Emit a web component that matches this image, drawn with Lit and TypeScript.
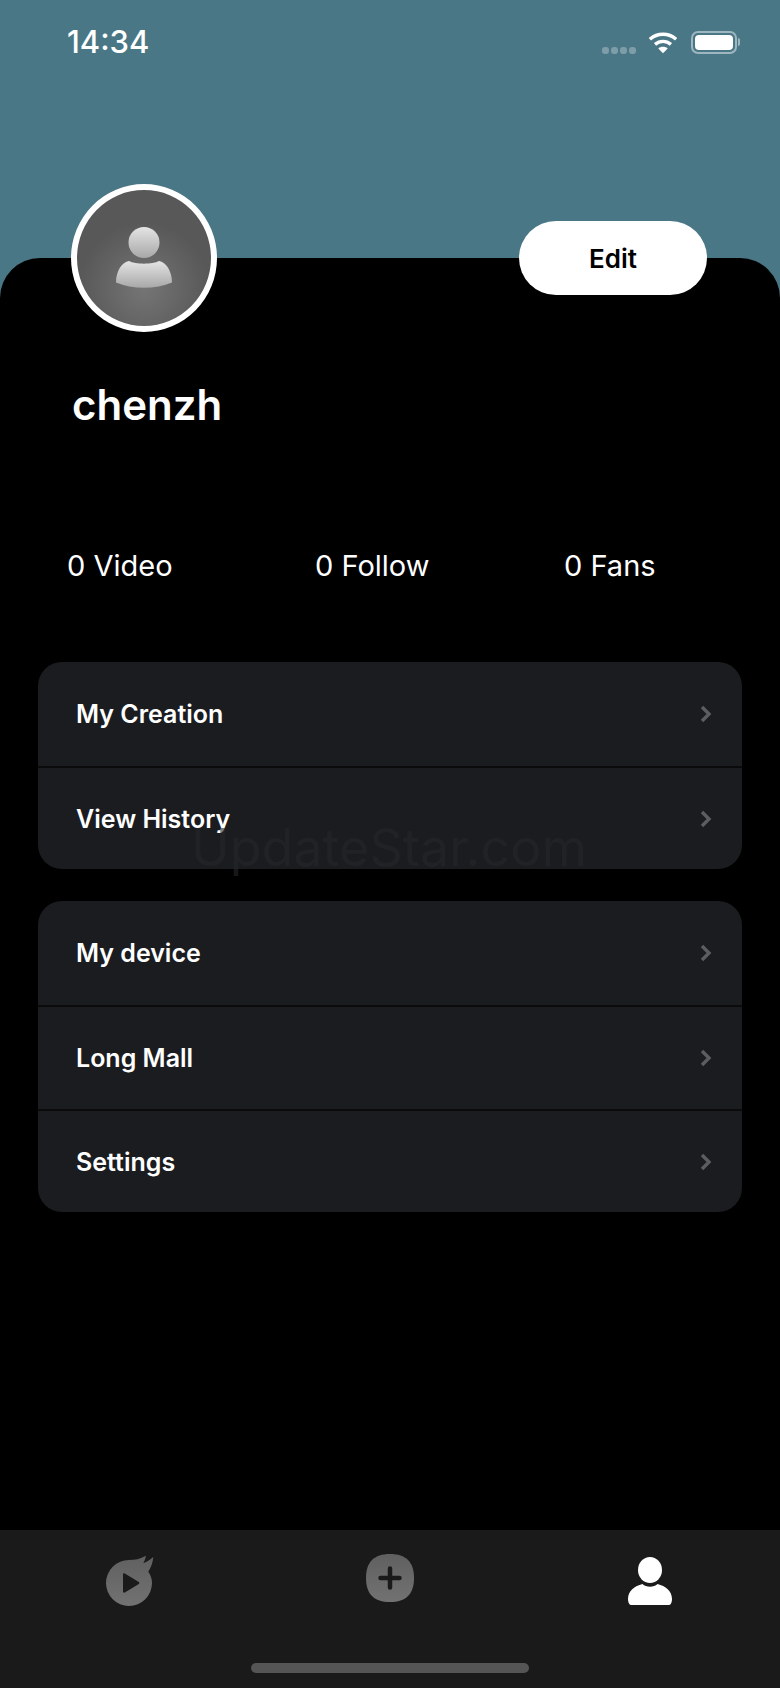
import { css, html, LitElement } from "lit";
import { customElement } from "lit/decorators.js";

const GROUPS = [
    ["My Creation", "View History"],
    ["My device", "Long Mall", "Settings"],
];

@customElement("app-root")
export class AppRoot extends LitElement {
    renderStatusBar() {
        return html`
        <div class="status">
            <span class="time">14:34</span>
            <div class="status-icons">
                <div class="dots"><i></i><i></i><i></i><i></i></div>
                <svg class="wifi" viewBox="0 0 32 24" fill="none" stroke="#fff" stroke-width="3.6" stroke-linecap="butt">
                    <path d="M2 8.5C10 1.5 22 1.5 30 8.5" />
                    <path d="M7.5 14C12.5 9.8 19.5 9.8 24.5 14" />
                    <path d="M16 23.5l-5-5.2c2.8-2.2 7.2-2.2 10 0z" fill="#fff" stroke="none" />
                </svg>
                <div class="battery"><div class="battery-fill"></div></div>
                <div class="battery-cap"></div>
            </div>
        </div>`;
    }

    renderRow(label: string) {
        return html`
        <div class="row">
            <span>${label}</span>
            <svg class="chevron" viewBox="0 0 12 18" fill="none" stroke="#5c5d60" stroke-width="3.4">
                <path d="M2 2l7 7-7 7" />
            </svg>
        </div>`;
    }

    renderTabs() {
        return html`
        <div class="tabs">
            <div class="tab-icons">
                <svg class="tab-icon" viewBox="0 0 60 60">
                    <defs>
                        <linearGradient id="grey" x1="0" y1="0" x2="0" y2="1">
                            <stop offset="0" stop-color="#606060" />
                            <stop offset="1" stop-color="#727272" />
                        </linearGradient>
                    </defs>
                    <path fill="url(#grey)" d="M29 6C35 6 40 5 46 1.700C45.500 4.500 44.500 7 43.300 9.300C47 8 50.500 5.500 53.300 3C53 8 51 13.500 48.300 17.700C50.700 21 52 25 52 29A23 23 0 1 1 29 6Z" />
                    <path fill="#1a1a1a" d="M23 20.500c0-1 1-1.500 1.800-1l14 8.500c.7.500.7 1.500 0 2l-14 8.500c-.8.500-1.800 0-1.800-1z" />
                </svg>
                <svg class="tab-icon plus" viewBox="0 0 48 48">
                    <path fill="url(#grey)" d="M24 0C40 0 48 8 48 24C48 40 40 48 24 48C8 48 0 40 0 24C0 8 8 0 24 0Z" />
                    <path d="M24 14.500v19M14.500 24h19" stroke="#1a1a1a" stroke-width="4.500" stroke-linecap="round" />
                </svg>
                <svg class="tab-icon me" viewBox="0 0 44 48" fill="#fff">
                    <ellipse cx="22" cy="13" rx="12" ry="13" />
                    <path d="M14.500 27c3.500 3.500 11.500 3.500 15 0C37.500 29 44 34 44 42c0 2.500-1 6-3 6H3c-2 0-3-3.500-3-6 0-8 6.500-13 14.500-15z" />
                </svg>
            </div>
            <div class="home-bar"></div>
        </div>`;
    }

    render() {
        return html`
        <div class="hero">${this.renderStatusBar()}</div>
        <div class="panel">
            <div class="profile-head">
                <div class="avatar">
                    <svg viewBox="0 0 56 61">
                        <defs>
                            <linearGradient id="face" x1="0" y1="0" x2="0" y2="1">
                                <stop offset="0" stop-color="#e4e4e4" />
                                <stop offset="1" stop-color="#a8a8a8" />
                            </linearGradient>
                        </defs>
                        <circle cx="28" cy="15.500" r="15.500" fill="url(#face)" />
                        <path fill="url(#face)" d="M13 34C19 37.500 37 37.500 43 34C50 35 56 44 56 55.500C40 62.500 16 62.500 0 55.500C0 44 6 35 13 34Z" />
                    </svg>
                </div>
                <button class="edit">Edit</button>
            </div>
            <div class="name">chenzh</div>
            <div class="stats">
                <span>0 Video</span>
                <span>0 Follow</span>
                <span>0 Fans</span>
            </div>
            <div class="groups">
                ${GROUPS.map(rows => html`<div class="card">${rows.map(r => this.renderRow(r))}</div>`)}
                <div class="watermark">UpdateStar.com</div>
            </div>
            <div class="spacer"></div>
            ${this.renderTabs()}
        </div>`;
    }

    static styles = css`
        :host {
            display: flex;
            flex-direction: column;
            width: 780px;
            height: 1688px;
            background: #4a7785;
            color: #fff;
            font-family: Inter, "Liberation Sans", sans-serif;
            overflow: hidden;
        }

        .hero {
            height: 258px;
            flex: none;
        }

        .status {
            display: flex;
            justify-content: space-between;
            align-items: center;
            padding: 26px 40px 0 67px;
        }

        .time {
            font-size: 31px;
            font-weight: 500;
            line-height: 32px;
        }

        .status-icons {
            display: flex;
            align-items: center;
        }

        .dots {
            display: flex;
            gap: 2px;
            margin: 16px 12px 0 0;
        }

        .dots i {
            width: 7px;
            height: 7px;
            border-radius: 3px;
            background: #7d9ea9;
        }

        .wifi {
            width: 30px;
            height: 23px;
            margin-right: 13px;
        }

        .battery {
            width: 46px;
            height: 23px;
            box-sizing: border-box;
            border: 2px solid #9db6bf;
            border-radius: 7px;
            padding: 2px;
        }

        .battery-fill {
            height: 100%;
            background: #fff;
            border-radius: 4px;
        }

        .battery-cap {
            width: 2px;
            height: 8px;
            margin-left: 1px;
            background: #9db6bf;
            border-radius: 0 2px 2px 0;
        }

        .panel {
            flex: 1;
            display: flex;
            flex-direction: column;
            background: #000;
            border-radius: 40px 40px 0 0;
        }

        .profile-head {
            display: flex;
            justify-content: space-between;
            align-items: center;
            height: 148px;
            margin-top: -74px;
            padding: 0 73px 0 71px;
        }

        .avatar {
            width: 146px;
            height: 148px;
            box-sizing: border-box;
            border: 6px solid #fff;
            border-radius: 50%;
            background: radial-gradient(circle at 50% 72%, #757575 0%, #585858 55%);
            display: flex;
            justify-content: center;
            padding-top: 37px;
        }

        .avatar svg {
            width: 56px;
            height: 61px;
        }

        .edit {
            width: 188px;
            height: 74px;
            border: none;
            border-radius: 37px;
            background: #fff;
            color: #000;
            font: 600 26px Inter, "Liberation Sans", sans-serif;
        }

        .name {
            margin: 48px 0 0 72px;
            font-size: 42px;
            font-weight: 600;
            line-height: 50px;
        }

        .stats {
            display: grid;
            grid-template-columns: 248px 249px 1fr;
            margin: 119px 0 0 67px;
            font-size: 29px;
            font-weight: 400;
            line-height: 34px;
        }

        .groups {
            position: relative;
            display: flex;
            flex-direction: column;
            gap: 32px;
            margin: 79px 38px 0;
        }

        .card {
            background: #1b1c1f;
            border-radius: 24px;
            overflow: hidden;
        }

        .row {
            display: flex;
            justify-content: space-between;
            align-items: center;
            height: 103.700px;
            box-sizing: border-box;
            padding: 0 30px 0 38px;
            font-size: 25px;
            font-weight: 600;
        }

        .row + .row {
            border-top: 2px solid #0b0b0c;
        }

        .chevron {
            width: 12px;
            height: 18px;
        }

        .watermark {
            position: absolute;
            left: 153px;
            top: 167px;
            font-size: 52px;
            line-height: 38px;
            color: #26272a;
            opacity: 0.6;
        }

        .spacer {
            flex: 1;
        }

        .tabs {
            height: 158px;
            flex: none;
            background: #1a1a1a;
            display: flex;
            flex-direction: column;
            align-items: center;
        }

        .tab-icons {
            display: grid;
            grid-template-columns: repeat(3, 1fr);
            width: 100%;
            height: 133px;
            justify-items: center;
        }

        .tab-icon {
            width: 60px;
            height: 60px;
            margin-top: 24px;
        }

        .tab-icon.plus {
            width: 48px;
            height: 48px;
        }

        .tab-icon.me {
            width: 44px;
            height: 48px;
            margin-top: 27px;
        }

        .home-bar {
            width: 278px;
            height: 10px;
            border-radius: 5px;
            background: #555;
        }
    `;
}
